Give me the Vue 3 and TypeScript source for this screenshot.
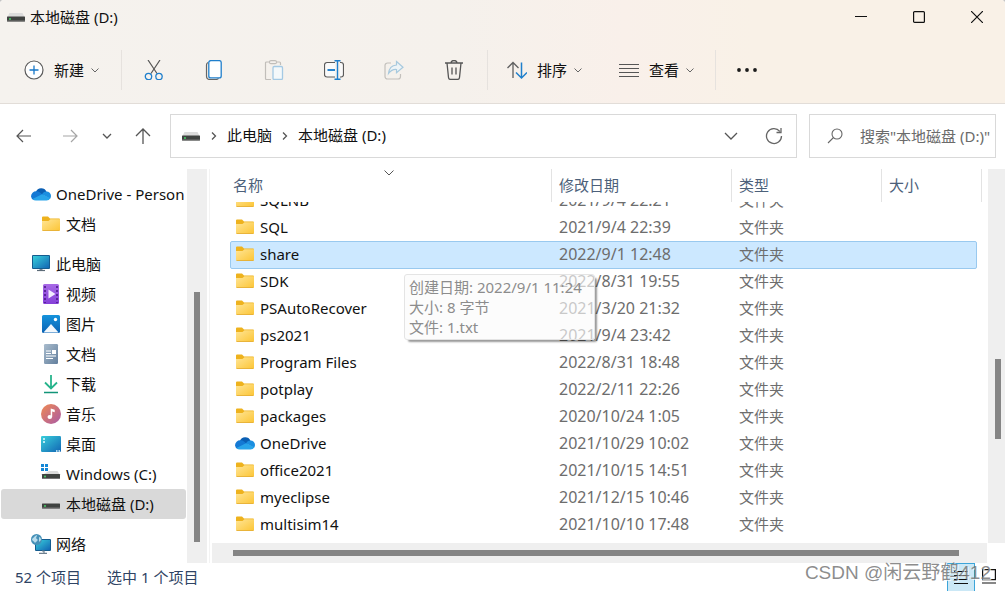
<script setup lang="ts">
import { ref } from 'vue'

interface TreeItem {
  label: string
  icon: string
  child?: boolean
  gap?: boolean
}
interface FileRow {
  name: string
  date: string
  icon?: string
}

const tools = [
  { id: 'cut', label: '剪切' },
  { id: 'copy', label: '复制' },
  { id: 'paste', label: '粘贴' },
  { id: 'rename', label: '重命名' },
  { id: 'share', label: '共享' },
  { id: 'trash', label: '删除' },
]

const tree: TreeItem[] = [
  { label: 'OneDrive - Person', icon: 'cloud' },
  { label: '文档', icon: 'folder', child: true },
  { label: '此电脑', icon: 'pc', gap: true },
  { label: '视频', icon: 'video', child: true },
  { label: '图片', icon: 'picture', child: true },
  { label: '文档', icon: 'document', child: true },
  { label: '下载', icon: 'download', child: true },
  { label: '音乐', icon: 'music', child: true },
  { label: '桌面', icon: 'desktop', child: true },
  { label: 'Windows (C:)', icon: 'sysdrive', child: true },
  { label: '本地磁盘 (D:)', icon: 'drive', child: true },
  { label: '网络', icon: 'network', gap: true },
]
const currentTree = ref(10)

const files: FileRow[] = [
  { name: 'SQLNB', date: '2021/9/4 22:21' },
  { name: 'SQL', date: '2021/9/4 22:39' },
  { name: 'share', date: '2022/9/1 12:48' },
  { name: 'SDK', date: '2022/8/31 19:55' },
  { name: 'PSAutoRecover', date: '2021/3/20 21:32' },
  { name: 'ps2021', date: '2021/9/4 23:42' },
  { name: 'Program Files', date: '2022/8/31 18:48' },
  { name: 'potplay', date: '2022/2/11 22:26' },
  { name: 'packages', date: '2020/10/24 1:05' },
  { name: 'OneDrive', date: '2021/10/29 10:02', icon: 'cloud' },
  { name: 'office2021', date: '2021/10/15 14:51' },
  { name: 'myeclipse', date: '2021/12/15 10:46' },
  { name: 'multisim14', date: '2021/10/10 17:48' },
]
const selected = ref('share')
const query = ref('')
</script>

<template>
  <div class="window">
    <svg class="sprite" width="0" height="0" aria-hidden="true">
      <defs>
        <linearGradient id="g-folder" x1="0" y1="0" x2="1" y2="1">
          <stop offset="0" stop-color="#ffe596" /><stop offset="1" stop-color="#fcc535" />
        </linearGradient>
        <linearGradient id="g-pc" x1="0" y1="0" x2="1" y2="1">
          <stop offset="0" stop-color="#38cfdb" /><stop offset="1" stop-color="#1266b4" />
        </linearGradient>
        <linearGradient id="g-video" x1="0" y1="0" x2="0" y2="1">
          <stop offset="0" stop-color="#a86ae6" /><stop offset="1" stop-color="#8540d8" />
        </linearGradient>
        <linearGradient id="g-pic" x1="0" y1="0" x2="0" y2="1">
          <stop offset="0" stop-color="#1593dc" /><stop offset="1" stop-color="#0a62b4" />
        </linearGradient>
        <linearGradient id="g-doc" x1="0" y1="0" x2="1" y2="1">
          <stop offset="0" stop-color="#a9bccd" /><stop offset="1" stop-color="#637f9d" />
        </linearGradient>
        <linearGradient id="g-music" x1="0" y1="0" x2="1" y2="1">
          <stop offset="0" stop-color="#f08a52" /><stop offset="1" stop-color="#a95aa6" />
        </linearGradient>
        <linearGradient id="g-down" x1="0" y1="0" x2="0" y2="1">
          <stop offset="0" stop-color="#35c795" /><stop offset="1" stop-color="#129578" />
        </linearGradient>
      </defs>
      <symbol id="i-cloud" viewBox="0 0 20 20">
        <path d="M4.800 8a5.800 5.800 0 0 1 10.700-.3L12 13H7z" fill="#0a5fb4" />
        <path d="M5.300 7.300A5.200 5.200 0 0 0 0 12.400 4.200 4.200 0 0 0 3 16l10-4-4-3.500a5.600 5.600 0 0 0-3.700-1.200z" fill="#1479d4" />
        <path d="M11 10.500a5 5 0 0 1 4.500-3A4.500 4.500 0 0 1 20 12c0 1-.4 2-1 2.800z" fill="#1b8ee0" />
        <path d="M11 10.300 1.500 14.900A4.400 4.400 0 0 0 4.800 16.500H15.500a4.500 4.500 0 0 0 3.900-2.200z" fill="#28a4ea" />
      </symbol>
      <symbol id="i-folder" viewBox="0 0 20 20">
        <path d="M1 3.500a1 1 0 0 1 1-1h5l2 2h9a1 1 0 0 1 1 1V10H1z" fill="#eeb21d" />
        <path d="M1 7h6.500l2-1.700H19V16a.8.8 0 0 1-.8.800H1.800A.8.800 0 0 1 1 16z" fill="url(#g-folder)" />
        <path d="M1.500 16.500h17" stroke="#e3a92a" stroke-width=".8" />
      </symbol>
      <symbol id="i-pc" viewBox="0 0 20 20">
        <rect x="1" y="1" width="18" height="14" rx="1" fill="#145c8f" />
        <rect x="2" y="2" width="16" height="12" fill="url(#g-pc)" />
        <path d="M8.500 15h3v1.500h-3z" fill="#7b8b98" /><path d="M6 16.500h8" stroke="#5d6c78" stroke-width="1.200" />
      </symbol>
      <symbol id="i-video" viewBox="0 0 20 20">
        <rect x="2" y="0" width="16" height="20" rx="1.500" fill="url(#g-video)" />
        <path d="M4 2v17M16 2v17" stroke="#4c188a" stroke-width="1.600" stroke-dasharray="2 2" />
        <path d="M7.500 5.500v9l7-4.500z" fill="#f3ecff" />
      </symbol>
      <symbol id="i-picture" viewBox="0 0 20 20">
        <rect x="1" y="1" width="18" height="18" rx="1.500" fill="url(#g-pic)" />
        <path d="M2.500 18.500 10 10l7.500 8.500z" fill="#f2f8fd" /><circle cx="14.500" cy="5.500" r="1.700" fill="#fff" />
      </symbol>
      <symbol id="i-document" viewBox="0 0 20 20">
        <rect x="3" y="0" width="14" height="20" rx="1.200" fill="url(#g-doc)" />
        <path d="M5 7h5M5 9.500h5M5 12h10M12 14.500H5" stroke="#fff" stroke-width="1.100" /><path d="M11 6h4v4h-4z" fill="#fff" />
      </symbol>
      <symbol id="i-download" viewBox="0 0 20 20">
        <path d="M10 1v13M4 8.500l6 6 6-6" fill="none" stroke="#27b48c" stroke-width="1.800" />
        <path d="M3 18.500h14" stroke="#129578" stroke-width="1.600" />
      </symbol>
      <symbol id="i-music" viewBox="0 0 20 20">
        <circle cx="10" cy="10" r="10" fill="url(#g-music)" />
        <ellipse cx="8.800" cy="13" rx="2.300" ry="2" fill="#fff" /><path d="M9.700 13V4.500l4 1.200v2.500l-2.500-.7V13z" fill="#fff" />
      </symbol>
      <symbol id="i-desktop" viewBox="0 0 20 20">
        <rect x="0" y="2" width="20" height="16" rx="1.300" fill="url(#g-pc)" />
        <path d="M2 5h2M2 8h2M15 17h1.500M17.500 17H19" stroke="#e4fbff" stroke-width="1.500" />
      </symbol>
      <symbol id="i-drive" viewBox="0 0 20 20">
        <path d="M3.500 6h13L19 11H1z" fill="#dcdcdc" />
        <rect x="1" y="9.500" width="18" height="5" rx=".4" fill="#404341" /><path d="M1 14h18" stroke="#777" />
        <circle cx="4" cy="12" r=".9" fill="#47df6b" />
      </symbol>
      <symbol id="i-sysdrive" viewBox="0 0 20 20">
        <path d="M8 7h8.500L19 11H1z" fill="#dcdcdc" />
        <rect x="1" y="10" width="18" height="5" rx=".4" fill="#404341" /><path d="M1 14.500h18" stroke="#777" />
        <circle cx="4" cy="12.500" r=".9" fill="#47df6b" />
        <path d="M0 0h3v3H0zM4 0h3v3H4zM0 4h3v3H0zM4 4h3v3H4z" fill="#1387d6" />
      </symbol>
      <symbol id="i-network" viewBox="0 0 20 20">
        <rect x="4" y="5" width="16" height="12" rx="1" fill="#145c8f" /><rect x="5" y="6" width="14" height="10" fill="url(#g-pc)" />
        <path d="M11 17h2v2M8 19.300h8" stroke="#6e8090" stroke-width="1.200" fill="none" />
        <circle cx="5.500" cy="5.500" r="5.500" fill="#4691b8" />
        <path d="M1 5c2-1 2-3 5-4 0 2-2 3 0 4s-1 3-2 4C3 7 1 7 1 5zM8 3c1 0 2 1 2 3L8 8z" fill="#b8dcec" />
      </symbol>
      <symbol id="i-new" viewBox="0 0 20 20">
        <circle cx="10" cy="10" r="9" fill="#fff" stroke="#5b5b5b" stroke-width="1.200" />
        <path d="M10 5.500v9M5.500 10h9" stroke="#1677c8" stroke-width="1.300" />
      </symbol>
      <symbol id="i-cut" viewBox="0 0 20 20">
        <path d="M4 0l9 13.500M16 0L7 13.500" stroke="#565656" stroke-width="1.200" />
        <g fill="none" stroke="#1f7fcc" stroke-width="1.300"><circle cx="4.500" cy="16.500" r="3.200" /><circle cx="15" cy="16.500" r="3.200" /></g>
      </symbol>
      <symbol id="i-copy" viewBox="0 0 20 20">
        <path d="M4 2.500C3 3 2.500 3.500 2.500 5v11c0 2 1.500 3.500 3.500 3.500h6c1.200 0 2-.5 2.500-1.200" fill="none" stroke="#666" stroke-width="1.200" />
        <rect x="4.800" y=".6" width="12.400" height="17.300" rx="2" fill="#fff" stroke="#1f7fcc" stroke-width="1.300" />
      </symbol>
      <symbol id="i-paste" viewBox="0 0 20 20">
        <path d="M7 19.500H2.500a1 1 0 0 1-1-1V3a1 1 0 0 1 1-1h13a1 1 0 0 1 1 1v2" fill="none" stroke="#c1beba" stroke-width="1.200" />
        <rect x="5.500" y=".6" width="7" height="3" rx="1.400" fill="#f4f1ed" stroke="#c1beba" stroke-width="1.100" />
        <rect x="9" y="6.500" width="9.500" height="13" rx="1.300" fill="#f4f8fa" stroke="#a4c9e4" stroke-width="1.300" />
      </symbol>
      <symbol id="i-rename" viewBox="0 0 20 20">
        <path d="M11 2.500H3a2.500 2.500 0 0 0-2.500 2.500v9.500A2.500 2.500 0 0 0 3 17h8M16 2.500h1a2.500 2.500 0 0 1 2.500 2.500v9.500A2.500 2.500 0 0 1 17 17h-1" fill="#fafafa" stroke="#5b5b5b" stroke-width="1.200" />
        <path d="M13.500.7v18.600M10.500.7h6M10.500 19.300h6" stroke="#1f7fcc" stroke-width="1.400" />
        <path d="M3.500 10H11" stroke="#1f7fcc" stroke-width="1.900" />
      </symbol>
      <symbol id="i-share" viewBox="0 0 20 20">
        <path d="M7 3H3.500A2.500 2.500 0 0 0 1 5.500v11A2.500 2.500 0 0 0 3.500 19H14a2.500 2.500 0 0 0 2.500-2.500V14" fill="none" stroke="#c3c0bc" stroke-width="1.200" />
        <path d="M12.500 1.500 19 7.200l-6.500 5.600V9.500C9 9.200 6.500 10.800 4.500 13.500 5 8.500 8 5.400 12.500 5z" fill="#eef4f7" stroke="#a7c9de" stroke-width="1.200" />
      </symbol>
      <symbol id="i-trash" viewBox="0 0 20 20">
        <path d="M1 3h18M7 3a3 2.500 0 0 1 6 0M3 3l1.500 14.500A2 2 0 0 0 6.500 19.400h7a2 2 0 0 0 2-1.900L17 3M8 7.500v7M12 7.500v7" fill="none" stroke="#555" stroke-width="1.300" />
      </symbol>
      <symbol id="i-sort" viewBox="0 0 20 20">
        <path d="M6 18V2.500M.5 8 6 2.500 11.500 8" fill="none" stroke="#606060" stroke-width="1.300" />
        <path d="M14.500 2.500V18M9 12.500l5.500 5.500 5.500-5.500" fill="none" stroke="#1f7fcc" stroke-width="1.500" />
      </symbol>
      <symbol id="i-view" viewBox="0 0 20 20">
        <path d="M0 4.500h20M0 8.500h20M0 12.500h20M0 16.500h20" stroke="#565656" />
      </symbol>
      <symbol id="i-more" viewBox="0 0 20 20">
        <g fill="#1b1b1b"><circle cx="2" cy="10" r="1.900" /><circle cx="10" cy="10" r="1.900" /><circle cx="18" cy="10" r="1.900" /></g>
      </symbol>
      <symbol id="i-chevron" viewBox="0 0 10 10">
        <path d="M1.500 3.500 5 7l3.500-3.500" fill="none" stroke="currentColor" />
      </symbol>
    </svg>

    <header class="chrome">
      <div class="titlebar">
        <svg class="icon"><use href="#i-drive" /></svg>
        <span class="title">本地磁盘 (D:)</span>
        <button class="winbtn" type="button" aria-label="最小化">
          <svg width="12" height="12"><path d="M0 5.500h12" stroke="#111" /></svg>
        </button>
        <button class="winbtn" type="button" aria-label="最大化">
          <svg width="12" height="12"><rect x=".6" y=".6" width="10.800" height="10.800" rx="1" fill="none" stroke="#111" stroke-width="1.200" /></svg>
        </button>
        <button class="winbtn" type="button" aria-label="关闭">
          <svg width="12" height="12"><path d="M0 0l12 12M12 0L0 12" stroke="#111" stroke-width="1.200" /></svg>
        </button>
      </div>

      <div class="toolbar">
        <button class="cmd new" type="button">
          <svg class="icon"><use href="#i-new" /></svg><span>新建</span><svg class="chev"><use href="#i-chevron" /></svg>
        </button>
        <div class="tools">
          <button v-for="t in tools" :key="t.id" class="tool" type="button" :aria-label="t.label">
            <svg class="icon"><use :href="'#i-' + t.id" /></svg>
          </button>
        </div>
        <div class="menus">
          <button class="cmd" type="button">
            <svg class="icon"><use href="#i-sort" /></svg><span>排序</span><svg class="chev"><use href="#i-chevron" /></svg>
          </button>
          <button class="cmd" type="button">
            <svg class="icon"><use href="#i-view" /></svg><span>查看</span><svg class="chev"><use href="#i-chevron" /></svg>
          </button>
        </div>
        <button class="more" type="button" aria-label="更多">
          <svg class="icon"><use href="#i-more" /></svg>
        </button>
      </div>
    </header>

    <nav class="navbar">
      <div class="arrows">
        <button type="button" aria-label="后退">
          <svg width="16" height="16" fill="none" stroke="#555" stroke-width="1.200"><path d="M15 8H1M7 2 1 8l6 6" /></svg>
        </button>
        <button type="button" aria-label="前进" disabled>
          <svg width="16" height="16" fill="none" stroke="#a5a5a5" stroke-width="1.200"><path d="M1 8h14M9 2l6 6-6 6" /></svg>
        </button>
        <button class="recent" type="button" aria-label="最近位置">
          <svg width="10" height="10" fill="none" stroke="#555" stroke-width="1.300"><path d="M1 3l4 4 4-4" /></svg>
        </button>
        <button class="up" type="button" aria-label="上移">
          <svg width="18" height="18" fill="none" stroke="#555" stroke-width="1.300"><path d="M9 17V2M2 9l7-7 7 7" /></svg>
        </button>
      </div>
      <div class="address">
        <svg class="icon"><use href="#i-drive" /></svg>
        <svg class="crumb-sep" viewBox="0 0 10 10"><path d="M3 1.500 6.500 5 3 8.500" /></svg>
        <a href="#pc">此电脑</a>
        <svg class="crumb-sep" viewBox="0 0 10 10"><path d="M3 1.500 6.500 5 3 8.500" /></svg>
        <a href="#d">本地磁盘 (D:)</a>
        <button class="drop" type="button" aria-label="历史记录">
          <svg width="14" height="14" fill="none" stroke="#555" stroke-width="1.300"><path d="M1 4l6 6 6-6" /></svg>
        </button>
        <button type="button" aria-label="刷新">
          <svg width="18" height="18" fill="none" stroke="#666" stroke-width="1.300"><path d="M16.500 9A7.500 7.500 0 1 1 14.800 4.300M16 1v4.500h-4.500" /></svg>
        </button>
      </div>
      <label class="search">
        <svg width="16" height="16" fill="none" stroke="#666" stroke-width="1.100"><circle cx="10" cy="6" r="5" /><path d="M6.500 9.500 1 15" /></svg>
        <input v-model="query" type="text" aria-label="搜索" placeholder="搜索&quot;本地磁盘 (D:)&quot;" />
      </label>
    </nav>

    <div class="body">
      <aside class="sidebar">
        <ul class="tree">
          <li v-for="(item, i) in tree" :key="i" :class="{ gap: item.gap }">
            <button
              type="button"
              class="node"
              :class="{ child: item.child, current: i === currentTree }"
              @click="currentTree = i"
            >
              <svg class="icon"><use :href="'#i-' + item.icon" /></svg><span>{{ item.label }}</span>
            </button>
          </li>
        </ul>
        <div class="vbar side"><div class="thumb"></div></div>
      </aside>

      <main class="content">
        <div class="list">
          <table>
            <thead>
              <tr>
                <th class="sorted">
                  名称
                  <svg class="sortmark" width="10" height="8" fill="none" stroke="#555"><path d="M.5 1.500 5 6l4.500-4.500" /></svg>
                </th>
                <th>修改日期</th>
                <th>类型</th>
                <th>大小</th>
              </tr>
            </thead>
            <tbody>
              <tr v-for="f in files" :key="f.name" :class="{ selected: f.name === selected }" @click="selected = f.name">
                <td class="name">
                  <svg class="icon"><use :href="'#i-' + (f.icon ?? 'folder')" /></svg><span>{{ f.name }}</span>
                </td>
                <td class="date">{{ f.date }}</td>
                <td>文件夹</td>
                <td></td>
              </tr>
            </tbody>
          </table>
          <div class="vbar main"><div class="thumb"></div></div>
          <div class="tooltip" role="tooltip">
            <div>创建日期: 2022/9/1 11:24</div>
            <div>大小: 8 字节</div>
            <div>文件: 1.txt</div>
          </div>
        </div>
        <div class="hbar"><div class="thumb"></div></div>
      </main>
    </div>

    <footer class="status">
      <span>52 个项目</span>
      <span>选中 1 个项目</span>
      <button class="mode on" type="button" aria-label="详细信息">
        <svg width="14" height="18" stroke="#111" stroke-width="1.200"><path d="M0 2.500h14M0 6.500h14M0 10.500h14M0 14.500h14" /></svg>
      </button>
      <button class="mode" type="button" aria-label="大图标">
        <svg width="14" height="18" fill="none" stroke="#111" stroke-width="1.200"><path d="M.6 1.600h12.800v10H.6zM0 15h14" /></svg>
      </button>
      <div class="watermark">CSDN @闲云野鹤412</div>
    </footer>
  </div>
</template>

<style>
body {
  background: #c4c4c4;
}
</style>

<style scoped>
.window {
  box-sizing: border-box;
  display: flex;
  flex-direction: column;
  height: 100vh;
  overflow: hidden;
  border-radius: 4px 4px 0 0;
  background: #fff;
  color: #111;
  font: 15px/20px "Noto Sans", "Noto Sans CJK SC", sans-serif;
}
.window * {
  box-sizing: border-box;
}
.sprite {
  position: absolute;
}
button {
  display: flex;
  align-items: center;
  justify-content: center;
  margin: 0;
  padding: 0;
  border: 0;
  background: none;
  color: inherit;
  font: inherit;
}
svg {
  display: block;
  flex: none;
}
.icon {
  width: 20px;
  height: 20px;
}
.chrome {
  border-bottom: 1px solid #e2ddd8;
  background: linear-gradient(90deg, #f5f2ee 0%, #f5f1ec 45%, #f9f0ea 62%, #f9f1e7 75%, #f9f1e7 100%);
}
.titlebar {
  display: flex;
  align-items: center;
  gap: 2px;
  height: 34px;
  padding-left: 6px;
}
.title {
  flex: 1;
  padding-left: 2px;
}
.winbtn {
  width: 56px;
  height: 34px;
}
.toolbar {
  display: flex;
  align-items: center;
  height: 69px;
  padding: 2px 0 0 24px;
}
.cmd {
  gap: 10px;
  height: 40px;
}
.cmd .chev {
  margin-left: -4px;
}
.chev {
  width: 10px;
  height: 10px;
  color: #666;
}
.new {
  width: 97px;
  justify-content: flex-start;
}
.tools {
  display: flex;
  padding: 0 3px 0 2px;
  border-left: 1px solid #e6e2de;
  border-right: 1px solid #e6e2de;
}
.tool {
  width: 60px;
  height: 40px;
}
.menus {
  display: flex;
  gap: 36px;
  padding: 0 20px 0 19px;
  border-right: 1px solid #e6e2de;
}
.more {
  width: 61px;
  height: 40px;
}
.navbar {
  display: flex;
  height: 65px;
  padding: 10px 9px 11px 16px;
}
.arrows {
  display: flex;
  align-items: center;
  width: 154px;
}
.arrows button {
  width: 16px;
  margin-right: 30px;
}
.arrows .recent {
  width: 10px;
  margin: 0 22px 0 -6px;
}
.arrows .up {
  width: 18px;
  margin: 0;
}
.address {
  display: flex;
  flex: 1;
  align-items: center;
  min-width: 0;
  padding: 0 13px 0 10px;
  border: 1px solid #d9d9d9;
}
.address a {
  padding-bottom: 2px;
  color: inherit;
  text-decoration: none;
}
.crumb-sep {
  width: 10px;
  height: 10px;
  margin: 0 8px;
  fill: none;
  stroke: #555;
  stroke-width: 1.3;
}
.drop {
  margin: 0 27px 0 auto;
}
.search {
  display: flex;
  align-items: center;
  gap: 17px;
  width: 187px;
  margin-left: 12px;
  padding-left: 17px;
  border: 1px solid #d9d9d9;
}
.search input {
  flex: 1;
  min-width: 0;
  width: 0;
  padding: 0;
  border: 0;
  outline: 0;
  background: none;
  font: inherit;
}
.search input::placeholder {
  color: #6b6b6b;
  opacity: 1;
}
.body {
  display: flex;
  flex: 1;
  min-height: 0;
}
.sidebar {
  display: flex;
  width: 210px;
  border-right: 1px solid #f3f3f3;
}
.tree {
  width: 187px;
  margin: 0;
  padding: 10px 1px 0;
  overflow: hidden;
  list-style: none;
}
.gap {
  margin-top: 10px;
}
.node {
  justify-content: flex-start;
  gap: 5px;
  width: 100%;
  height: 30px;
  padding-left: 30px;
  overflow: hidden;
  border-radius: 3px;
  white-space: nowrap;
}
.child {
  padding-left: 40px;
}
.current {
  background: #d9d9d9;
}
.vbar {
  display: flex;
  justify-content: center;
  background: #efefef;
}
.side {
  width: 20px;
}
.thumb {
  background: #858585;
}
.vbar .thumb {
  width: 6px;
}
.side .thumb {
  margin: 123px 0 21px;
}
.content {
  display: flex;
  flex: 1;
  flex-direction: column;
  min-width: 0;
  padding-left: 2px;
}
.list {
  position: relative;
  display: flex;
  flex: 1;
  justify-content: space-between;
  min-height: 0;
  padding-left: 18px;
}
table {
  display: flex;
  flex-direction: column;
  width: calc(100% - 23px);
}
thead,
tbody {
  display: block;
}
tbody {
  flex: 1;
  min-height: 0;
  padding-right: 5px;
  overflow: hidden;
}
tr {
  display: grid;
  grid-template-columns: 1fr 180px 150px 100px;
}
th {
  height: 33px;
  padding: 6px 0 0 7px;
  border-right: 1px solid #e3e3e3;
  color: #4c607a;
  font-weight: 400;
  text-align: left;
}
.sorted {
  position: relative;
  padding-left: 3px;
}
.sortmark {
  position: absolute;
  top: 0;
  left: calc(50% - 7px);
}
tbody tr {
  grid-template-columns: 1fr 180px 150px 95px;
  height: 28px;
  margin-bottom: -1px;
  border: 1px solid transparent;
  border-radius: 2px;
}
tbody tr:first-child {
  margin-top: -15px;
}
tbody tr.selected {
  border-color: #99c9ef;
  background: #cce8ff;
}
td {
  padding: 2px 0 0 8px;
  color: #6d6d6d;
}
td.name {
  display: flex;
  gap: 5px;
  padding-left: 4px;
  color: #111;
}
td.date {
  font-size: 16px;
}
.main {
  width: 17px;
}
.main .thumb {
  height: 80px;
  margin: 190px 0 0 2px;
}
.tooltip {
  position: absolute;
  top: 105px;
  left: 192px;
  width: 191px;
  padding: 2px 4px;
  border: 1px solid #e4e4e4;
  border-radius: 3px;
  background: rgba(250, 250, 250, 0.65);
  box-shadow: 3px 3px 2px -1px rgba(0, 0, 0, 0.4);
  color: #8c8c8c;
  white-space: nowrap;
}
.hbar {
  display: flex;
  align-items: center;
  height: 20px;
  margin-right: 18px;
  padding: 0 28px 0 21px;
  background: #efefef;
}
.hbar .thumb {
  width: 100%;
  height: 6px;
}
.status {
  position: relative;
  display: flex;
  align-items: center;
  height: 28px;
  padding: 0 2px 0 15px;
  color: #2f4464;
}
.status span {
  margin-right: 26px;
}
.mode {
  width: 28px;
  height: 28px;
}
.mode.on {
  margin-left: auto;
  border: 1px solid #3da5d9;
  border-bottom: 0;
  background: #cbe8f6;
}
.watermark {
  position: absolute;
  right: 14px;
  top: -3px;
  color: rgba(120, 120, 120, 0.85);
  font: 19px/26px "Liberation Sans", "Noto Sans CJK SC", sans-serif;
  text-shadow: 1px 1px 0 rgba(255, 255, 255, 0.7);
  white-space: nowrap;
  pointer-events: none;
}
</style>
